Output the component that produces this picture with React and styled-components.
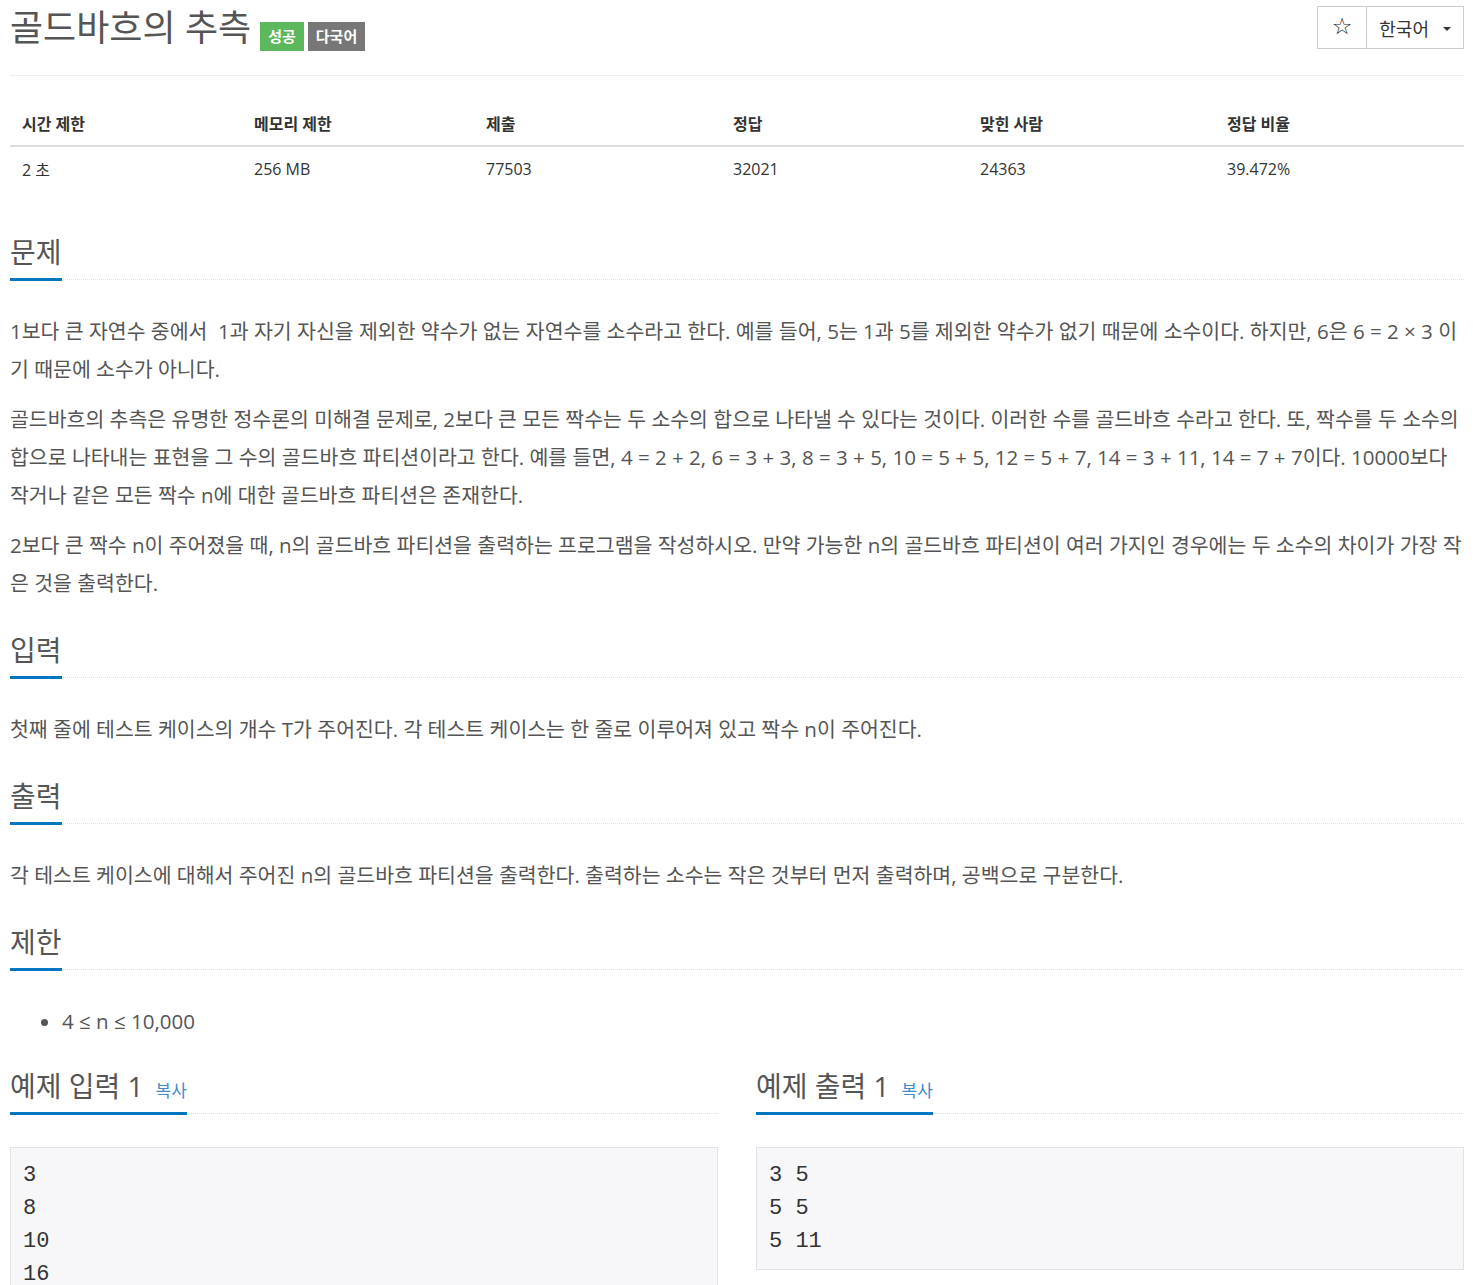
import styled, { createGlobalStyle } from 'styled-components';

const GlobalStyle = createGlobalStyle`
  * { box-sizing: border-box; }
  html, body {
    margin: 0;
    padding: 0;
    background: #fff;
    font-family: "Open Sans", "Noto Sans CJK KR", sans-serif;
    color: #555;
  }
`;

const Page = styled.div`
  padding: 0 16px 0 10px;
  width: 1480px;
`;

const Header = styled.div`
  display: flex;
  justify-content: space-between;
  align-items: flex-start;
  border-bottom: 1px solid #eee;
  height: 76px;
`;

const Title = styled.h1`
  margin: 0;
  padding-top: 5px;
  display: flex;
  align-items: flex-start;
  gap: 4px;
`;

const TitleText = styled.span`
  font-size: 36px;
  font-weight: 400;
  line-height: 46px;
  color: #555;
  margin-right: 5px;
`;

const Label = styled.span`
  display: inline-block;
  background: ${p => p.$color};
  color: #fff;
  font-size: 15px;
  line-height: 29px;
  padding: 0 8px;
  margin-top: 17px;
  font-weight: 700;
`;

const BtnGroup = styled.div`
  display: flex;
  margin-top: 6px;
  border: 1px solid #ccc;
  height: 43px;
`;

const Btn = styled.div`
  display: flex;
  align-items: center;
  justify-content: center;
  gap: 14px;
  padding: 0 ${p => p.$pad}px;
  font-size: 18px;
  color: #333;
  & + & { border-left: 1px solid #ccc; }
`;

const Star = styled.span`
  font-family: "DejaVu Sans", sans-serif;
  font-size: 23px;
  color: #222;
  margin-top: -4px;
`;

const Caret = styled.span`
  width: 0;
  height: 0;
  border-left: 4px solid transparent;
  border-right: 4px solid transparent;
  border-top: 4px solid #333;
  margin-top: 3px;
`;

const Table = styled.table`
  width: 100%;
  border-collapse: collapse;
  margin-top: 24px;
  color: #333;
  font-size: 16px;
  th {
    text-align: left;
    font-weight: 700;
    padding: 11px 12px 10px;
    border-bottom: 2px solid #ddd;
  }
  td {
    padding: 10px 12px;
  }
`;

const Section = styled.section`
  margin-top: ${p => p.$top || 26}px;
`;

const HeadRow = styled.div`
  display: flex;
  align-items: flex-end;
  border-bottom: 1px dotted #ddd;
  margin-bottom: ${p => p.$gap || 32}px;
`;

const Headline = styled.h2`
  margin: 0 0 -2px;
  font-size: 28px;
  font-weight: 400;
  color: #555;
  line-height: 44px;
  padding-bottom: 4px;
  border-bottom: 3px solid #0076c0;
  display: flex;
  align-items: baseline;
  gap: 12px;
`;

const CopyLink = styled.span`
  font-size: 17px;
  line-height: 1;
  color: #428bca;
`;

const Para = styled.p`
  margin: 0 0 12px;
  font-size: 20.5px;
  line-height: 38px;
  color: #555;
`;

const List = styled.ul`
  margin: 0;
  padding-left: 52px;
  font-size: 20.5px;
  line-height: 38px;
`;

const Samples = styled.div`
  display: grid;
  grid-template-columns: 708px 708px;
  align-items: start;
  gap: 38px;
  margin-top: 24px;
`;

const Pre = styled.pre`
  margin: 0;
  background: #f7f7f9;
  border: 1px solid #e1e1e8;
  padding: 11px 12px;
  font-family: "Liberation Mono", monospace;
  font-size: 22px;
  line-height: 33px;
  color: #333;
`;

const Sample = styled.div``;

export default function App() {
  return (
    <>
      <GlobalStyle />
      <Page>
        <Header>
          <Title>
            <TitleText>골드바흐의 추측</TitleText>
            <Label $color="#5cb85c">성공</Label>
            <Label $color="#777">다국어</Label>
          </Title>
          <BtnGroup>
            <Btn $pad={14}><Star>☆</Star></Btn>
            <Btn $pad={12}>한국어 <Caret /></Btn>
          </BtnGroup>
        </Header>

        <Table>
          <thead>
            <tr>
              <th style={{ width: 232 }}>시간 제한</th>
              <th style={{ width: 232 }}>메모리 제한</th>
              <th style={{ width: 247 }}>제출</th>
              <th style={{ width: 247 }}>정답</th>
              <th style={{ width: 247 }}>맞힌 사람</th>
              <th>정답 비율</th>
            </tr>
          </thead>
          <tbody>
            <tr>
              <td>2 초</td>
              <td>256 MB</td>
              <td>77503</td>
              <td>32021</td>
              <td>24363</td>
              <td>39.472%</td>
            </tr>
          </tbody>
        </Table>

        <Section $top={39}>
          <HeadRow><Headline>문제</Headline></HeadRow>
          <Para>1보다 큰 자연수 중에서&nbsp; 1과 자기 자신을 제외한 약수가 없는 자연수를 소수라고 한다. 예를 들어, 5는 1과 5를 제외한 약수가 없기 때문에 소수이다. 하지만, 6은 6 = 2 × 3 이기 때문에 소수가 아니다.</Para>
          <Para>골드바흐의 추측은 유명한 정수론의 미해결 문제로, 2보다 큰 모든 짝수는 두 소수의 합으로 나타낼 수 있다는 것이다. 이러한 수를 골드바흐 수라고 한다. 또, 짝수를 두 소수의 합으로 나타내는 표현을 그 수의 골드바흐 파티션이라고 한다. 예를 들면, 4 = 2 + 2, 6 = 3 + 3, 8 = 3 + 5, 10 = 5 + 5, 12 = 5 + 7, 14 = 3 + 11, 14 = 7 + 7이다. 10000보다 작거나 같은 모든 짝수 n에 대한 골드바흐 파티션은 존재한다.</Para>
          <Para>2보다 큰 짝수 n이 주어졌을 때, n의 골드바흐 파티션을 출력하는 프로그램을 작성하시오. 만약 가능한 n의 골드바흐 파티션이 여러 가지인 경우에는 두 소수의 차이가 가장 작은 것을 출력한다.</Para>
        </Section>

        <Section>
          <HeadRow><Headline>입력</Headline></HeadRow>
          <Para>첫째 줄에 테스트 케이스의 개수 T가 주어진다. 각 테스트 케이스는 한 줄로 이루어져 있고 짝수 n이 주어진다.</Para>
        </Section>

        <Section>
          <HeadRow><Headline>출력</Headline></HeadRow>
          <Para>각 테스트 케이스에 대해서 주어진 n의 골드바흐 파티션을 출력한다. 출력하는 소수는 작은 것부터 먼저 출력하며, 공백으로 구분한다.</Para>
        </Section>

        <Section>
          <HeadRow><Headline>제한</Headline></HeadRow>
          <List><li>4 ≤ n ≤ 10,000</li></List>
        </Section>

        <Samples>
          <Sample>
            <HeadRow $gap={33}><Headline>예제 입력 1 <CopyLink>복사</CopyLink></Headline></HeadRow>
            <Pre>{'3\n8\n10\n16'}</Pre>
          </Sample>
          <Sample>
            <HeadRow $gap={33}><Headline>예제 출력 1 <CopyLink>복사</CopyLink></Headline></HeadRow>
            <Pre>{'3 5\n5 5\n5 11'}</Pre>
          </Sample>
        </Samples>
      </Page>
    </>
  );
}
